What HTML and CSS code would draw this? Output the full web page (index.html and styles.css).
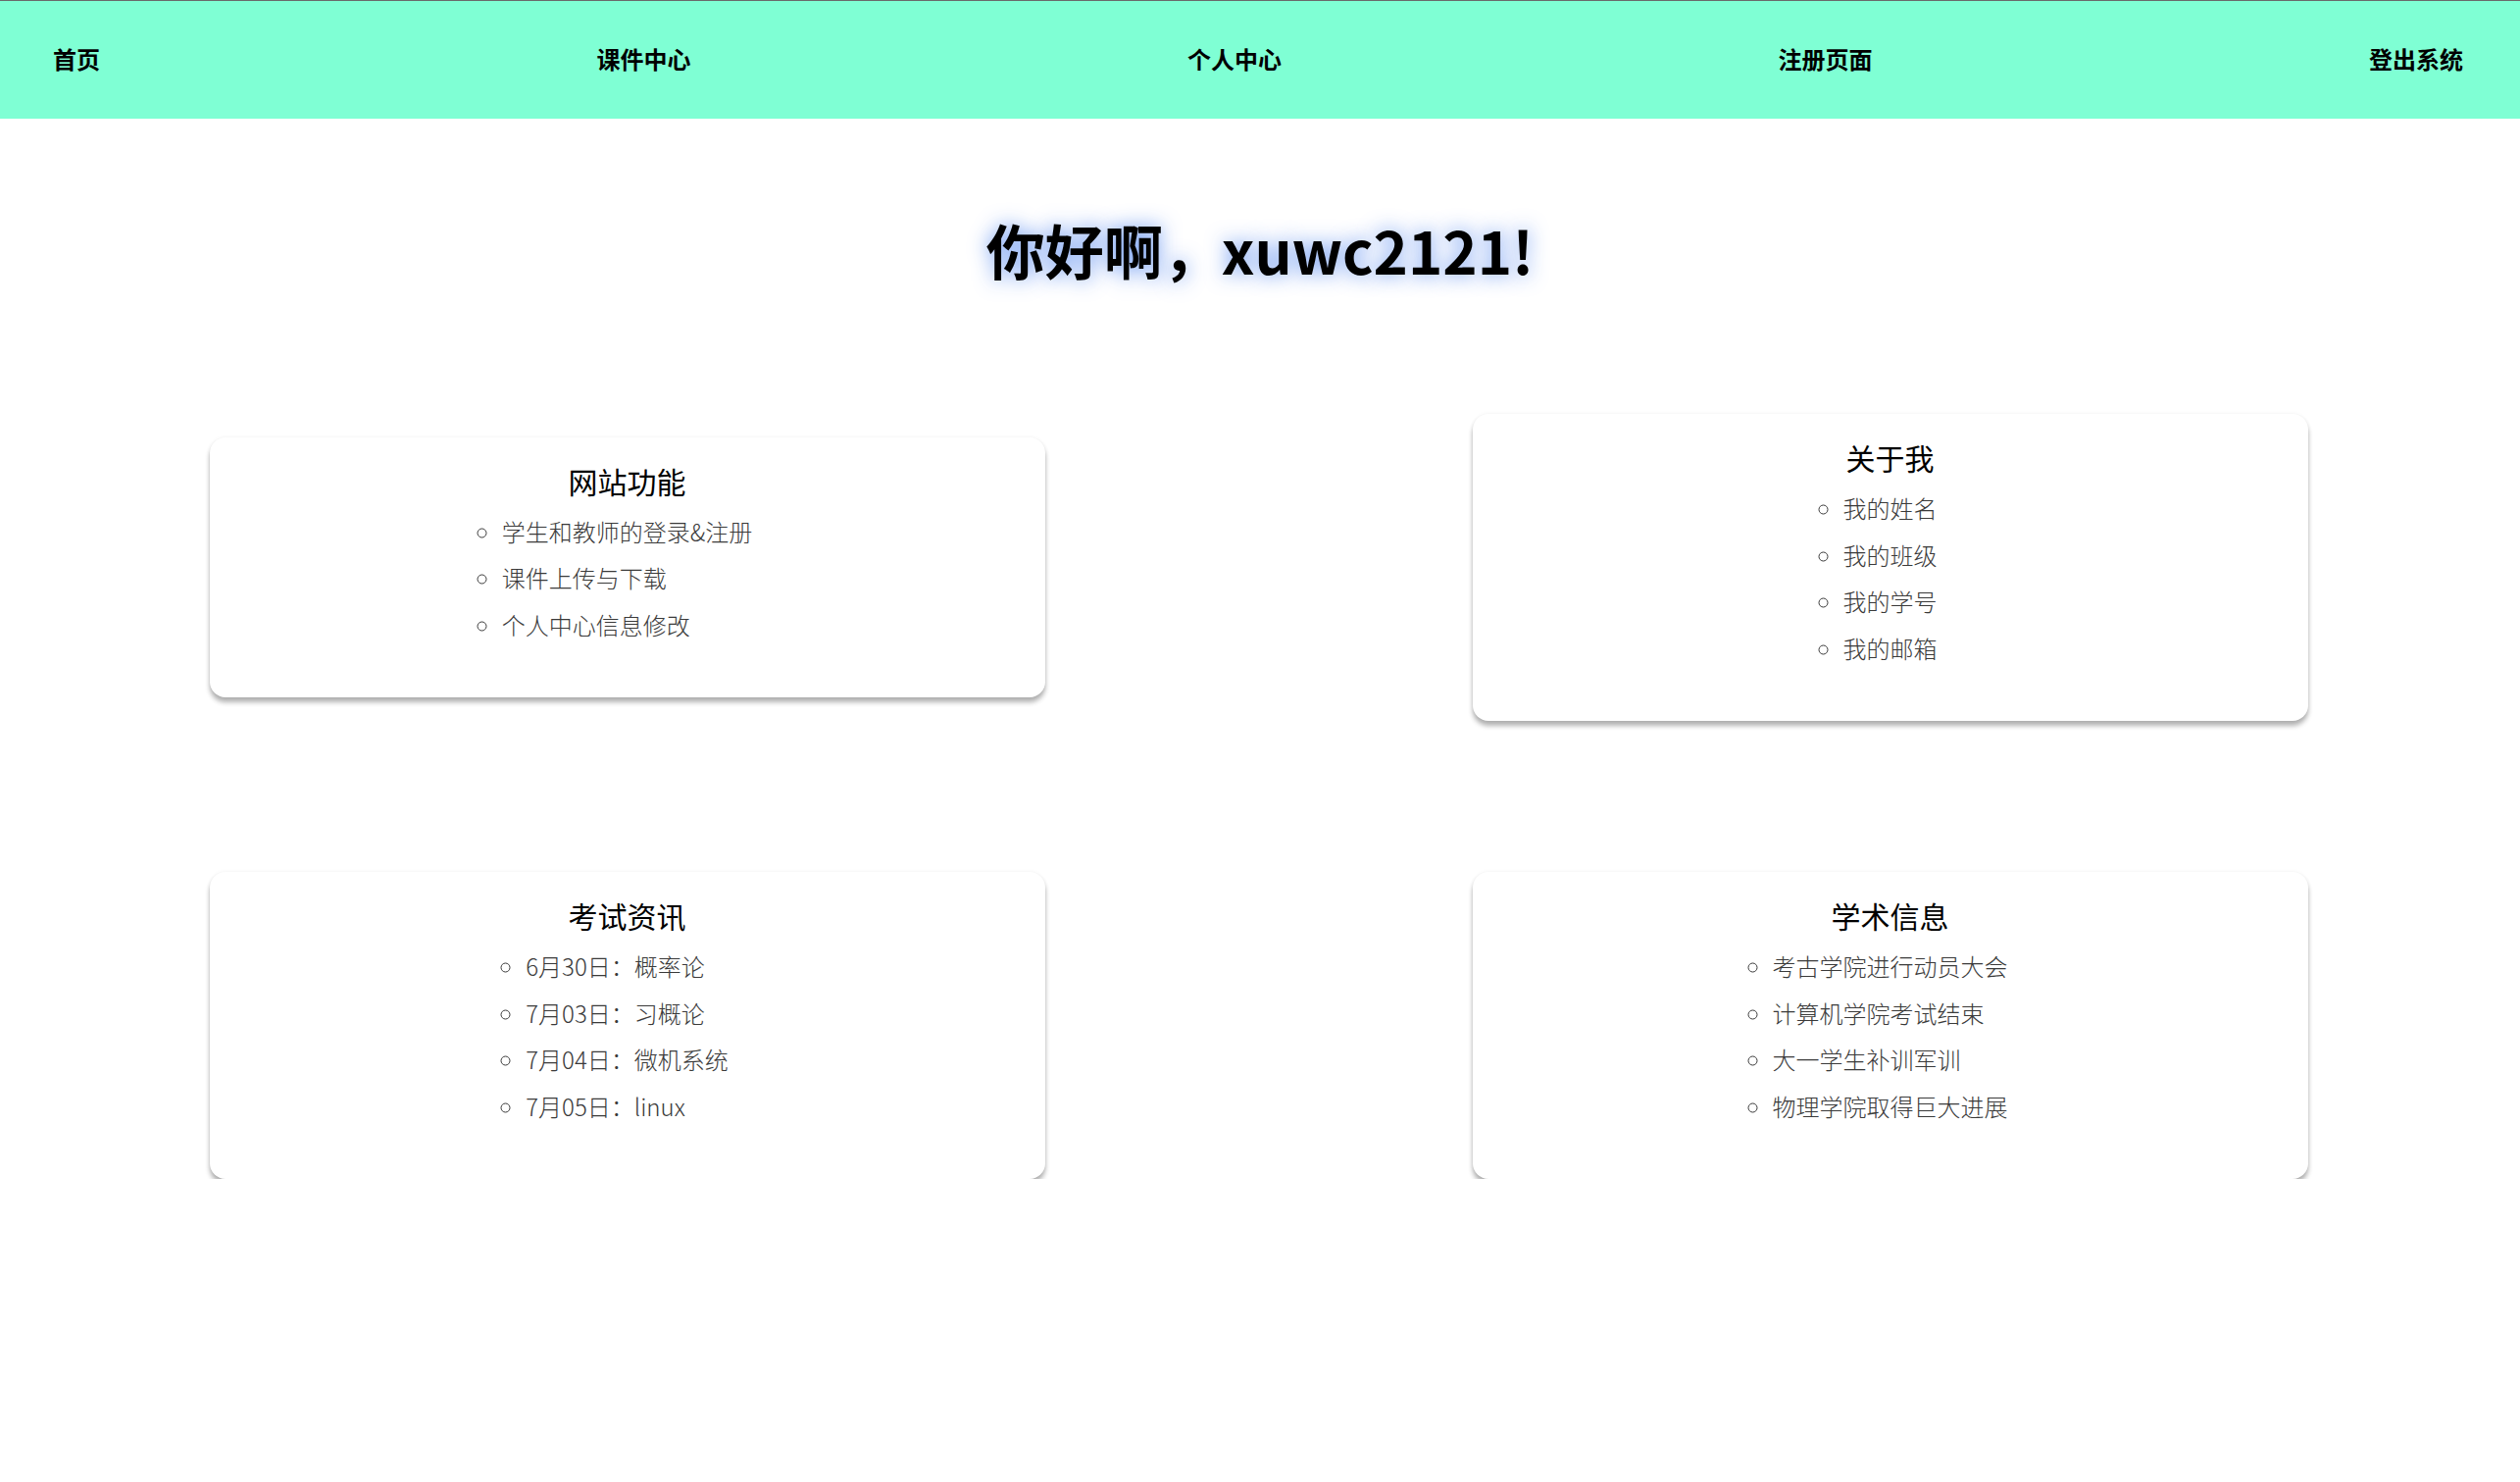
FILE: index.html
```html
<!DOCTYPE html>
<html lang="zh-CN">
<head>
<meta charset="utf-8">
<title>首页</title>
<link rel="stylesheet" href="styles.css">
</head>
<body>
<nav class="nav">
  <a class="nav-link" href="#">首页</a>
  <a class="nav-link" href="#">课件中心</a>
  <a class="nav-link" href="#">个人中心</a>
  <a class="nav-link" href="#">注册页面</a>
  <a class="nav-link" href="#">登出系统</a>
</nav>
<h1 class="greeting">你好啊，xuwc2121!</h1>
<main class="grid">
  <section class="card">
    <h3 class="card-title">网站功能</h3>
    <ul class="card-list">
      <li>学生和教师的登录&amp;注册</li>
      <li>课件上传与下载</li>
      <li>个人中心信息修改</li>
    </ul>
  </section>
  <section class="card">
    <h3 class="card-title">关于我</h3>
    <ul class="card-list">
      <li>我的姓名</li>
      <li>我的班级</li>
      <li>我的学号</li>
      <li>我的邮箱</li>
    </ul>
  </section>
  <section class="card">
    <h3 class="card-title">考试资讯</h3>
    <ul class="card-list">
      <li>6月30日：概率论</li>
      <li>7月03日：习概论</li>
      <li>7月04日：微机系统</li>
      <li>7月05日：linux</li>
    </ul>
  </section>
  <section class="card">
    <h3 class="card-title">学术信息</h3>
    <ul class="card-list">
      <li>考古学院进行动员大会</li>
      <li>计算机学院考试结束</li>
      <li>大一学生补训军训</li>
      <li>物理学院取得巨大进展</li>
    </ul>
  </section>
</main>
</body>
</html>
```
FILE: styles.css
```css
html, body {
  margin: 0;
  padding: 0;
  background: #ffffff;
}
body {
  font-family: "Noto Sans CJK SC", "Noto Sans", sans-serif;
  color: #000;
}
.nav {
  display: flex;
  justify-content: space-between;
  align-items: center;
  height: 120px;
  padding: 0 58px 0 54px;
  background: #7fffd4;
  border-top: 1px solid #6a6a6a;
}
.nav-link {
  font-size: 24px;
  font-weight: 700;
  color: #000;
  text-decoration: none;
  line-height: 30px;
  margin-top: -2px;
}
.greeting {
  margin: 93px 0 0;
  text-align: center;
  font-size: 60px;
  line-height: 80px;
  font-weight: 700;
  color: #000;
  text-shadow: 0 0 20px rgba(90, 140, 240, 0.9);
}
.grid {
  display: grid;
  grid-template-columns: 1fr 1fr;
  justify-items: center;
  align-items: center;
  row-gap: 154px;
  margin-top: 128px;
}
.card {
  width: 852px;
  box-sizing: border-box;
  padding: 26px 20px 51px;
  background: #fff;
  border-radius: 16px;
  box-shadow: 0 5px 5px rgba(0, 0, 0, 0.3), 0 0 4px rgba(0, 0, 0, 0.06);
  text-align: center;
}
.card:nth-child(odd) {
  margin-right: 6px;
}
.card-title {
  margin: 0 0 10px;
  font-size: 30px;
  line-height: 36px;
  font-weight: 400;
  color: #000;
}
.card-list {
  display: inline-block;
  margin: 0;
  padding: 0;
  text-align: left;
  list-style: circle outside;
}
.card-list li {
  font-size: 24px;
  line-height: 47.5px;
  font-weight: 300;
  color: #3a3a3a;
}
```
